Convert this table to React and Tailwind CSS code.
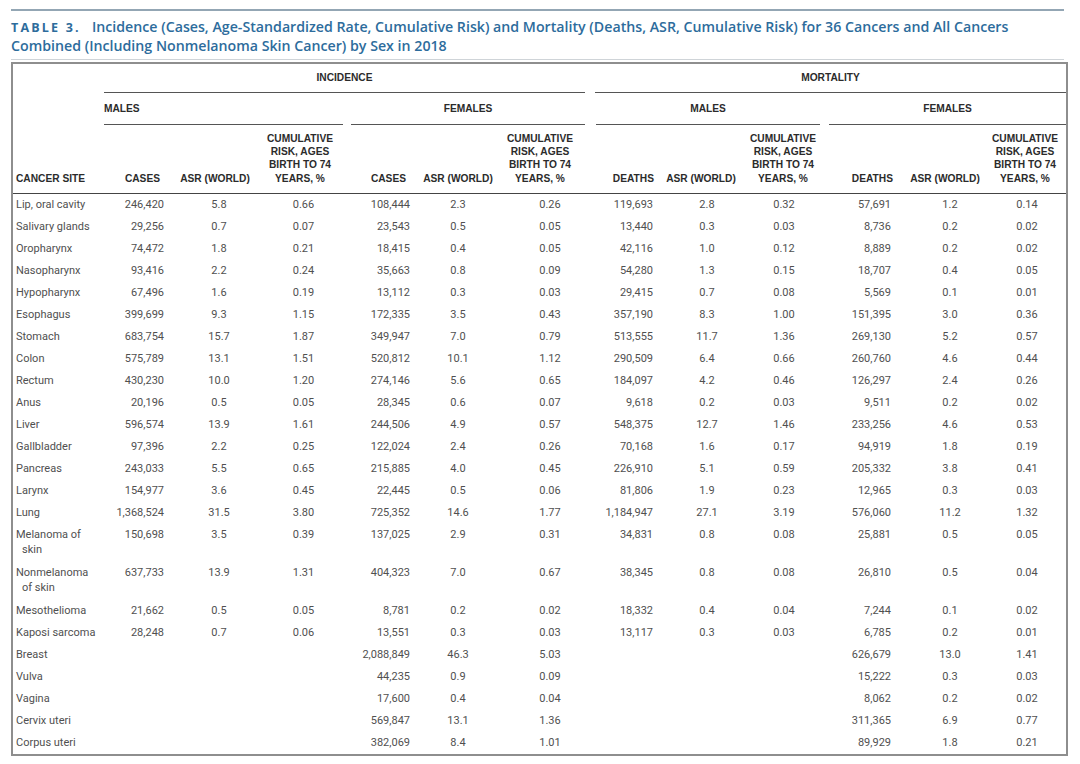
import React from "react";

const GRID =
  "grid grid-cols-[91px_64px_94px_81px_71px_88px_88px_67px_100px_68px_70px_95px_76px]";

// site label lines, then males incidence, females incidence, males mortality, females mortality
const ROWS = [
  [["Lip, oral cavity"], "246,420", "5.8", "0.66", "108,444", "2.3", "0.26", "119,693", "2.8", "0.32", "57,691", "1.2", "0.14"],
  [["Salivary glands"], "29,256", "0.7", "0.07", "23,543", "0.5", "0.05", "13,440", "0.3", "0.03", "8,736", "0.2", "0.02"],
  [["Oropharynx"], "74,472", "1.8", "0.21", "18,415", "0.4", "0.05", "42,116", "1.0", "0.12", "8,889", "0.2", "0.02"],
  [["Nasopharynx"], "93,416", "2.2", "0.24", "35,663", "0.8", "0.09", "54,280", "1.3", "0.15", "18,707", "0.4", "0.05"],
  [["Hypopharynx"], "67,496", "1.6", "0.19", "13,112", "0.3", "0.03", "29,415", "0.7", "0.08", "5,569", "0.1", "0.01"],
  [["Esophagus"], "399,699", "9.3", "1.15", "172,335", "3.5", "0.43", "357,190", "8.3", "1.00", "151,395", "3.0", "0.36"],
  [["Stomach"], "683,754", "15.7", "1.87", "349,947", "7.0", "0.79", "513,555", "11.7", "1.36", "269,130", "5.2", "0.57"],
  [["Colon"], "575,789", "13.1", "1.51", "520,812", "10.1", "1.12", "290,509", "6.4", "0.66", "260,760", "4.6", "0.44"],
  [["Rectum"], "430,230", "10.0", "1.20", "274,146", "5.6", "0.65", "184,097", "4.2", "0.46", "126,297", "2.4", "0.26"],
  [["Anus"], "20,196", "0.5", "0.05", "28,345", "0.6", "0.07", "9,618", "0.2", "0.03", "9,511", "0.2", "0.02"],
  [["Liver"], "596,574", "13.9", "1.61", "244,506", "4.9", "0.57", "548,375", "12.7", "1.46", "233,256", "4.6", "0.53"],
  [["Gallbladder"], "97,396", "2.2", "0.25", "122,024", "2.4", "0.26", "70,168", "1.6", "0.17", "94,919", "1.8", "0.19"],
  [["Pancreas"], "243,033", "5.5", "0.65", "215,885", "4.0", "0.45", "226,910", "5.1", "0.59", "205,332", "3.8", "0.41"],
  [["Larynx"], "154,977", "3.6", "0.45", "22,445", "0.5", "0.06", "81,806", "1.9", "0.23", "12,965", "0.3", "0.03"],
  [["Lung"], "1,368,524", "31.5", "3.80", "725,352", "14.6", "1.77", "1,184,947", "27.1", "3.19", "576,060", "11.2", "1.32"],
  [["Melanoma of", "skin"], "150,698", "3.5", "0.39", "137,025", "2.9", "0.31", "34,831", "0.8", "0.08", "25,881", "0.5", "0.05"],
  [["Nonmelanoma", "of skin"], "637,733", "13.9", "1.31", "404,323", "7.0", "0.67", "38,345", "0.8", "0.08", "26,810", "0.5", "0.04"],
  [["Mesothelioma"], "21,662", "0.5", "0.05", "8,781", "0.2", "0.02", "18,332", "0.4", "0.04", "7,244", "0.1", "0.02"],
  [["Kaposi sarcoma"], "28,248", "0.7", "0.06", "13,551", "0.3", "0.03", "13,117", "0.3", "0.03", "6,785", "0.2", "0.01"],
  [["Breast"], "", "", "", "2,088,849", "46.3", "5.03", "", "", "", "626,679", "13.0", "1.41"],
  [["Vulva"], "", "", "", "44,235", "0.9", "0.09", "", "", "", "15,222", "0.3", "0.03"],
  [["Vagina"], "", "", "", "17,600", "0.4", "0.04", "", "", "", "8,062", "0.2", "0.02"],
  [["Cervix uteri"], "", "", "", "569,847", "13.1", "1.36", "", "", "", "311,365", "6.9", "0.77"],
  [["Corpus uteri"], "", "", "", "382,069", "8.4", "1.01", "", "", "", "89,929", "1.8", "0.21"],
];

const DATA_CLS = [
  "text-right pr-[4px]",
  "text-center pl-[8px]",
  "text-center pl-[2px]",
  "text-right pr-[4px]",
  "text-center",
  "text-center pl-[8px]",
  "text-right pr-[4px]",
  "text-center",
  "text-center pr-[14px]",
  "text-right pr-[4px]",
  "text-center pl-[15px]",
  "text-center pr-[2px]",
];

const CUM = ["CUMULATIVE", "RISK, AGES", "BIRTH TO 74", "YEARS, %"];

// [lines, alignment classes]
const HEAD_COLS = [
  [["CANCER SITE"], "items-start pl-[3px]"],
  [["CASES"], "items-end pr-[8px]"],
  [["ASR (WORLD)"], "items-center"],
  [CUM, "items-center pr-[5px]"],
  [["CASES"], "items-end pr-[8px]"],
  [["ASR (WORLD)"], "items-center"],
  [CUM, "items-center pr-[12px]"],
  [["DEATHS"], "items-end pr-[3px]"],
  [["ASR (WORLD)"], "items-center pr-[12px]"],
  [CUM, "items-center pr-[16px]"],
  [["DEATHS"], "items-end pr-[2px]"],
  [["ASR (WORLD)"], "items-center pl-[5px]"],
  [CUM, "items-center pr-[6px]"],
];

const spanText = "text-[10.2px] font-bold text-[#2b2b2b] whitespace-nowrap";

export default function App() {
  return (
    <div className="w-[1080px] h-[764px] bg-white overflow-hidden font-['Liberation_Sans',Arial,sans-serif]">
      <div className="pl-[11px] pt-[9px] w-[1068px]">
        <div className="h-[2px] bg-[#93a6b4] w-[1053px]" />
        <div className="pt-[7px] pb-[4px] text-[14.2px] leading-[18px] text-[#2d6c9c] font-['Open_Sans',sans-serif] font-semibold border-b border-[#cfd4d8] w-[1053px] whitespace-nowrap">
          <span className="font-bold tracking-[2.2px] text-[12.5px]">TABLE 3.</span>
          <span className="ml-[11px]">
            Incidence (Cases, Age-Standardized Rate, Cumulative Risk) and Mortality (Deaths, ASR, Cumulative Risk) for 36 Cancers and All Cancers
          </span>
          <br />
          Combined (Including Nonmelanoma Skin Cancer) by Sex in 2018
        </div>

        <div className="mt-[2px] border-2 border-[#8e8e8e] w-[1057px]">
          {/* incidence / mortality */}
          <div className={GRID}>
            <div className="col-start-2 col-span-6 pr-[5px]">
              <div className={`h-[29px] flex items-center justify-center border-b-[1.5px] border-[#555] ${spanText}`}>
                INCIDENCE
              </div>
            </div>
            <div className="col-span-6 pl-[5px]">
              <div className={`h-[29px] flex items-center justify-center border-b-[1.5px] border-[#555] ${spanText}`}>
                MORTALITY
              </div>
            </div>
          </div>

          {/* males / females */}
          <div className={GRID}>
            <div className="col-start-2 col-span-3">
              <div className={`h-[32px] flex items-center border-b-[1.5px] border-[#555] ${spanText}`}>
                MALES
              </div>
            </div>
            <div className="col-span-3 pl-[8px] pr-[5px]">
              <div className={`h-[32px] flex items-center justify-center border-b-[1.5px] border-[#555] ${spanText}`}>
                FEMALES
              </div>
            </div>
            <div className="col-span-3 pl-[6px] pr-[5px]">
              <div className={`h-[32px] flex items-center justify-center border-b-[1.5px] border-[#555] ${spanText}`}>
                MALES
              </div>
            </div>
            <div className="col-span-3 pl-[4px]">
              <div className={`h-[32px] flex items-center justify-center border-b-[1.5px] border-[#555] ${spanText}`}>
                FEMALES
              </div>
            </div>
          </div>

          {/* column headings */}
          <div className={`${GRID} h-[69px] border-b-[1.5px] border-[#444] pb-[8px] leading-[13.3px] ${spanText}`}>
            {HEAD_COLS.map(([lines, cls], i) => (
              <div key={i} className={`flex flex-col justify-end ${cls}`}>
                {lines.map((l) => (
                  <div key={l}>{l}</div>
                ))}
              </div>
            ))}
          </div>

          {/* body */}
          <div className="font-['Roboto',sans-serif] text-[11px] leading-[15px] text-[#505050]">
            {ROWS.map((row, r) => {
              const [site, ...vals] = row;
              const tall = site.length > 1;
              return (
                <div key={r} className={`${GRID} ${tall ? "h-[38px]" : "h-[22px]"} pt-[3px]`}>
                  <div className="pl-[3px]">
                    {site[0]}
                    {tall && <div className="pl-[6px]">{site[1]}</div>}
                  </div>
                  {vals.map((v, c) => (
                    <div key={c} className={DATA_CLS[c]}>
                      {v}
                    </div>
                  ))}
                </div>
              );
            })}
          </div>
        </div>
      </div>
    </div>
  );
}
